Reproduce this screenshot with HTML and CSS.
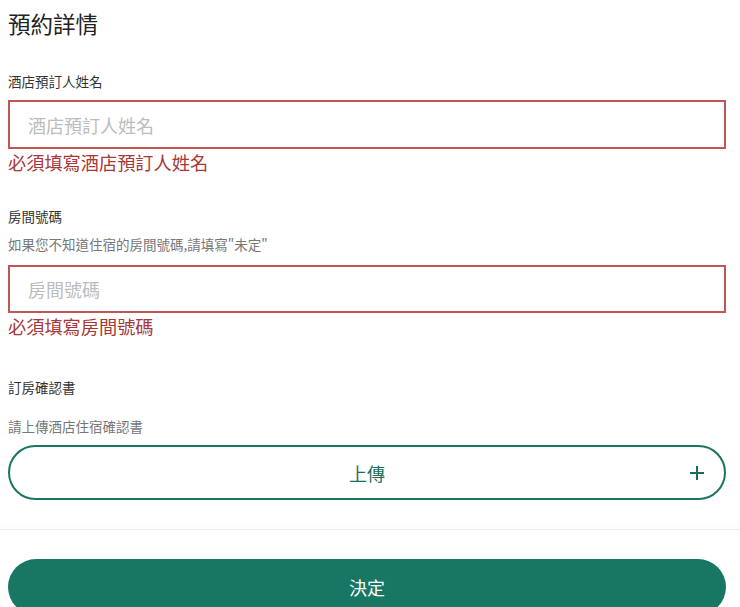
FILE: index.html
```html
<!DOCTYPE html>
<html lang="zh-Hant">
<head>
<meta charset="utf-8">
<title>預約詳情</title>
<link rel="stylesheet" href="styles.css">
</head>
<body>
<main class="content">
  <h1 class="title">預約詳情</h1>

  <section class="field field-first">
    <label class="label" for="name">酒店預訂人姓名</label>
    <input class="input input-error" id="name" type="text" placeholder="酒店預訂人姓名">
    <p class="error">必須填寫酒店預訂人姓名</p>
  </section>

  <section class="field">
    <label class="label" for="room">房間號碼</label>
    <p class="hint">如果您不知道住宿的房間號碼,請填寫"未定"</p>
    <input class="input input-error input-room" id="room" type="text" placeholder="房間號碼">
    <p class="error">必須填寫房間號碼</p>
  </section>

  <section class="field field-upload">
    <div class="label">訂房確認書</div>
    <p class="hint hint-upload">請上傳酒店住宿確認書</p>
    <button class="upload" type="button">
      <span class="upload-text">上傳</span>
      <svg class="plus" width="16" height="16" viewBox="0 0 16 16" aria-hidden="true">
        <path d="M8 1v14M1 8h14" stroke="currentColor" stroke-width="2" fill="none" stroke-linecap="butt"/>
      </svg>
    </button>
  </section>
</main>
<footer class="footer">
  <button class="submit" type="button">決定</button>
</footer>
</body>
</html>
```

FILE: styles.css
```css
* { box-sizing: border-box; }

html, body {
  margin: 0;
  padding: 0;
  background: #ffffff;
}

body {
  font-family: "Noto Sans CJK TC", "Noto Sans CJK SC", "Noto Sans", sans-serif;
  color: #333333;
  width: 740px;
  height: 607px;
  overflow: hidden;
}

.content {
  padding: 0 14px 0 8px;
}

.title {
  margin: 7px 0 0;
  font-size: 22.5px;
  line-height: 32px;
  font-weight: 400;
  color: #222222;
}

.field {
  display: flex;
  flex-direction: column;
}

.field-first { margin-top: 32px; }
.field + .field { margin-top: 32px; }
.field-upload { margin-top: 39px !important; }

.label {
  font-size: 13.5px;
  line-height: 20px;
  color: #333333;
}

.hint {
  margin: 8px 0 0;
  font-size: 13.5px;
  line-height: 20px;
  color: #777777;
}

.hint-upload { margin-top: 19px; }

.input {
  margin-top: 9px;
  width: 100%;
  height: 49px;
  padding: 0 18px;
  border: 2px solid #c25656;
  border-radius: 0;
  outline: none;
  background: #ffffff;
  font-family: "Noto Sans CJK TC", "Noto Sans CJK SC", sans-serif;
  font-size: 18px;
  color: #333333;
}

.input-room {
  margin-top: 11px;
  height: 48px;
}

.input::placeholder {
  color: #bcbcbc;
}

.error {
  margin: 1px 0 0;
  font-size: 18.2px;
  line-height: 24px;
  color: #a83838;
}

.upload {
  margin-top: 9px;
  position: relative;
  display: flex;
  align-items: center;
  justify-content: center;
  width: 100%;
  height: 55px;
  border: 2px solid #1b7560;
  border-radius: 28px;
  background: #ffffff;
  color: #1b6e5a;
  font-family: "Noto Sans CJK TC", "Noto Sans CJK SC", sans-serif;
  font-size: 18px;
  padding: 0;
  cursor: pointer;
}

.upload-text {
  color: #1b6e5a;
}

.plus {
  position: absolute;
  right: 19px;
  top: 50%;
  transform: translateY(-50%);
  color: #1b6e5a;
}

.footer {
  margin-top: 29px;
  border-top: 1px solid #ececec;
  box-shadow: 0 -3px 6px rgba(0, 0, 0, 0.02);
  padding: 29px 14px 0 8px;
}

.submit {
  display: block;
  width: 100%;
  height: 56px;
  border: none;
  border-radius: 28px;
  background: #177762;
  color: #ffffff;
  font-family: "Noto Sans CJK TC", "Noto Sans CJK SC", sans-serif;
  font-size: 18px;
  padding: 0;
  cursor: pointer;
}
```
